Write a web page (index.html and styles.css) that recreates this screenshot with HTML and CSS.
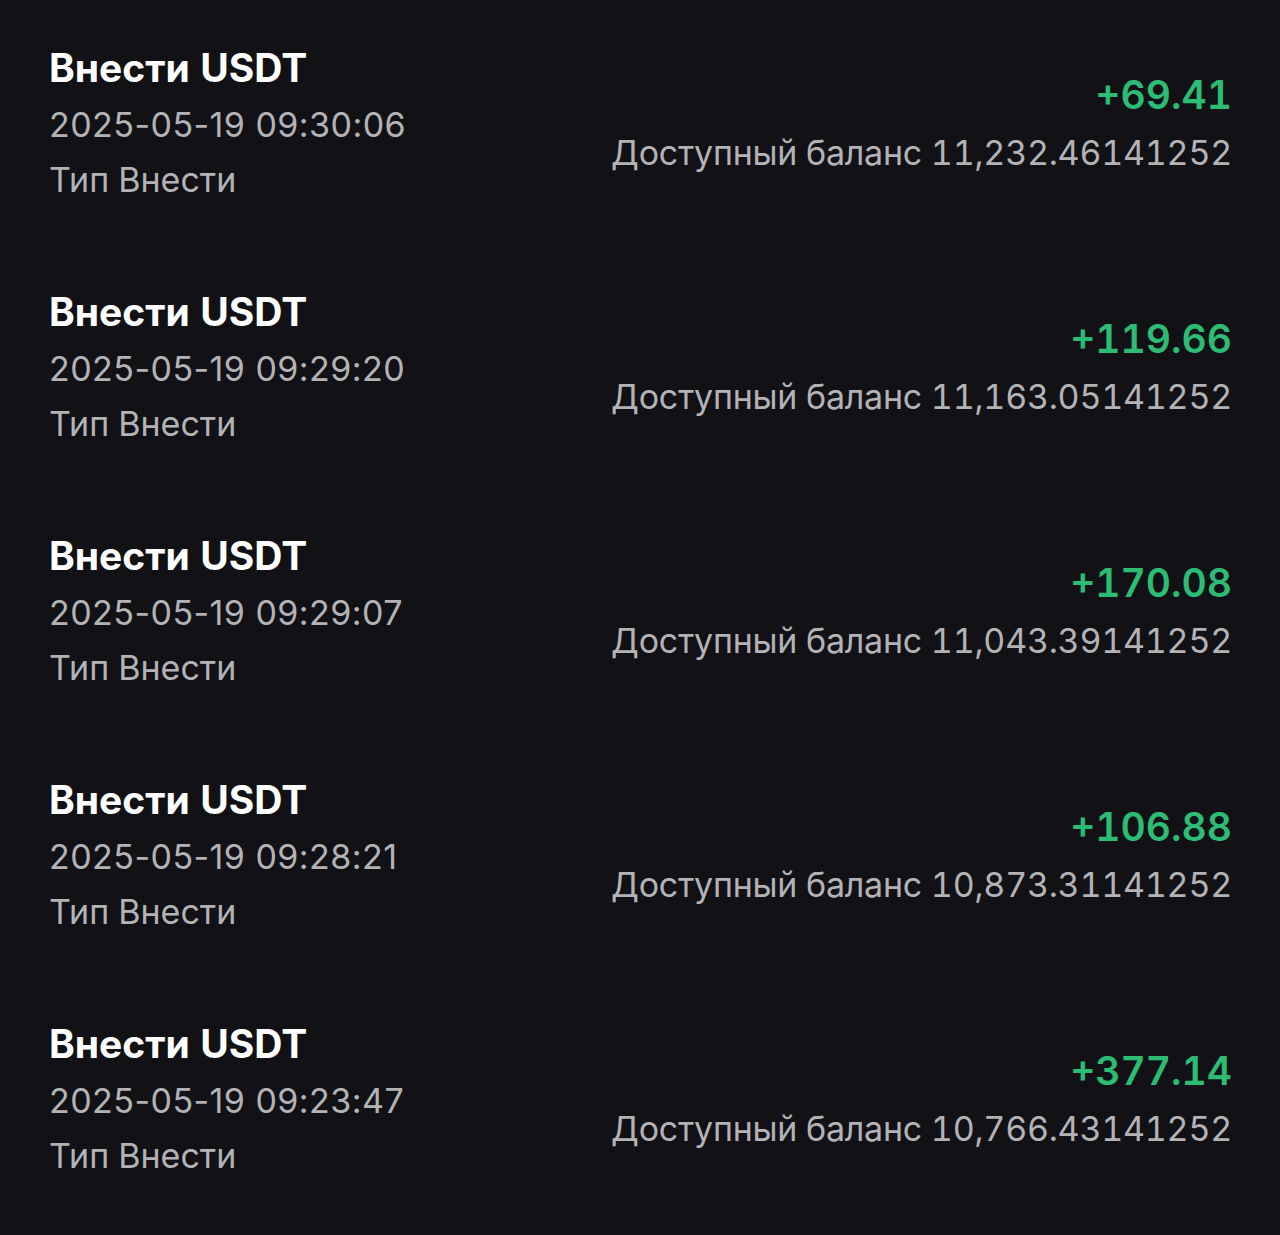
FILE: index.html
```html
<!DOCTYPE html>
<html lang="ru">
<head>
<meta charset="utf-8">
<link rel="stylesheet" href="styles.css">
</head>
<body>
<div class="list">
  <div class="row">
    <div class="left">
      <div class="title">Внести USDT</div>
      <div class="sub date">2025-05-19 09:30:06</div>
      <div class="sub">Тип Внести</div>
    </div>
    <div class="right">
      <div class="amount">+69.41</div>
      <div class="sub balance">Доступный баланс 11,232.46141252</div>
    </div>
  </div>
  <div class="row">
    <div class="left">
      <div class="title">Внести USDT</div>
      <div class="sub date">2025-05-19 09:29:20</div>
      <div class="sub">Тип Внести</div>
    </div>
    <div class="right">
      <div class="amount">+119.66</div>
      <div class="sub balance">Доступный баланс 11,163.05141252</div>
    </div>
  </div>
  <div class="row">
    <div class="left">
      <div class="title">Внести USDT</div>
      <div class="sub date">2025-05-19 09:29:07</div>
      <div class="sub">Тип Внести</div>
    </div>
    <div class="right">
      <div class="amount">+170.08</div>
      <div class="sub balance">Доступный баланс 11,043.39141252</div>
    </div>
  </div>
  <div class="row">
    <div class="left">
      <div class="title">Внести USDT</div>
      <div class="sub date">2025-05-19 09:28:21</div>
      <div class="sub">Тип Внести</div>
    </div>
    <div class="right">
      <div class="amount">+106.88</div>
      <div class="sub balance">Доступный баланс 10,873.31141252</div>
    </div>
  </div>
  <div class="row">
    <div class="left">
      <div class="title">Внести USDT</div>
      <div class="sub date">2025-05-19 09:23:47</div>
      <div class="sub">Тип Внести</div>
    </div>
    <div class="right">
      <div class="amount">+377.14</div>
      <div class="sub balance">Доступный баланс 10,766.43141252</div>
    </div>
  </div>
</div>
</body>
</html>
```
FILE: styles.css
```css
html, body {
  margin: 0;
  padding: 0;
  background: #111116;
}
body {
  font-family: "Inter", "Noto Sans", sans-serif;
  font-variant-numeric: tabular-nums;
  color: #ffffff;
  width: 1280px;
  height: 1235px;
  overflow: hidden;
}
.list {
  display: flex;
  flex-direction: column;
  padding: 0 48px 0 49px;
}
.row {
  height: 244px;
  display: flex;
  justify-content: space-between;
  align-items: center;
  padding-top: 4px;
  box-sizing: border-box;
}
.left, .right {
  display: flex;
  flex-direction: column;
}
.right {
  align-items: flex-end;
}
.title {
  font-size: 39px;
  font-weight: 700;
  line-height: 56px;
  color: #ffffff;
}
.left .sub {
  font-size: 34px;
  line-height: 56px;
  color: #b3b3b6;
}
.left .date {
  font-variant-numeric: normal;
  letter-spacing: 0.45px;
  position: relative;
  top: 1px;
}
.right .sub {
  font-size: 34px;
  line-height: 58px;
  color: #b3b3b6;
}
.right .balance {
  letter-spacing: -0.25px;
}
.amount {
  font-size: 39px;
  font-weight: 600;
  line-height: 58px;
  color: #2dbc74;
}
```
